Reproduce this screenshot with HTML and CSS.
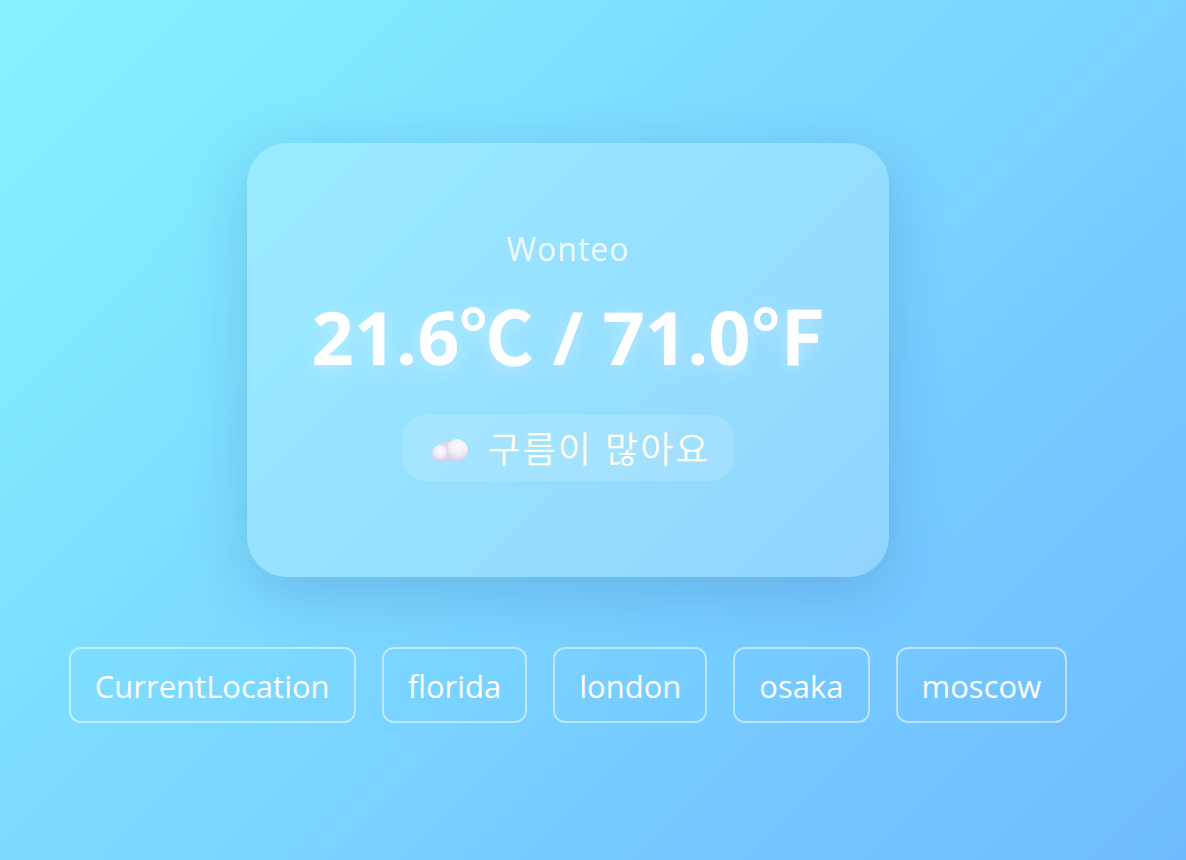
FILE: index.html
```html
<!DOCTYPE html>
<html lang="ko">
<head>
<meta charset="utf-8">
<meta name="viewport" content="width=device-width, initial-scale=1">
<title>Weather</title>
<link rel="stylesheet" href="styles.css">
</head>
<body>
<main class="app">
  <section class="card">
    <h2 class="city">Wonteo</h2>
    <h1 class="temp">21.6℃ / 71.0℉</h1>
    <p class="sky">
      <svg class="cloud" viewBox="0 0 36 24" aria-hidden="true">
        <defs>
          <radialGradient id="puff" cx=".56" cy=".32" r=".76">
            <stop offset="0" stop-color="#fcfbfd"/>
            <stop offset=".5" stop-color="#f0eef6"/>
            <stop offset=".8" stop-color="#ddd5ee"/>
            <stop offset="1" stop-color="#d1c5eb"/>
          </radialGradient>
          <linearGradient id="base" x1="0" y1="0" x2="0" y2="1">
            <stop offset="0" stop-color="#d3d9e2"/>
            <stop offset=".5" stop-color="#e6e2f0"/>
            <stop offset="1" stop-color="#d2c6ee"/>
          </linearGradient>
        </defs>
        <path fill="url(#base)" d="M7 23C3 23 0 20 0 16c0-4 3-8 7-9 1-3 5-4 9-3l14 8c4 5 1 11-5 11z"/>
        <path fill="url(#puff)" d="M8 7c4 0 7 4 7 8 0 5-3 8-7 8s-8-3-8-7c0-5 3-9 8-9z"/>
        <path fill="url(#puff)" d="M25 1c6 0 11 5 11 11s-4 11-10 11h-5c-4-2-7-6-7-11C14 6 19 1 25 1z"/>
      </svg>
      <span>구름이 많아요</span>
    </p>
  </section>
  <nav class="places">
    <button class="place" type="button">CurrentLocation</button>
    <button class="place" type="button">florida</button>
    <button class="place" type="button">london</button>
    <button class="place" type="button">osaka</button>
    <button class="place" type="button">moscow</button>
  </nav>
</main>
</body>
</html>
```
FILE: styles.css
```css
* { box-sizing: border-box; }
body {
  margin: 0;
  min-height: 100vh;
  display: flex;
  background: linear-gradient(135deg, #86f2ff, #6fbaff);
  font-family: "Open Sans", "Noto Sans CJK KR", sans-serif;
  color: #fff;
}
.app {
  flex: 1;
  display: flex;
  flex-direction: column;
  align-items: center;
  justify-content: center;
  gap: 70px;
  padding: 24px 50px 19px 0;
}
.card {
  display: flex;
  flex-direction: column;
  align-items: center;
  padding: 80px 64px 96px;
  border-radius: 40px;
  background: rgba(255, 255, 255, .2);
  box-shadow: 0 16px 60px rgba(31, 60, 135, .2);
}
.city {
  margin: 0;
  font-size: 32px;
  line-height: 52px;
  font-weight: 400;
  letter-spacing: 1px;
  opacity: .85;
}
.temp {
  margin: 8px 0 24px;
  font-size: 74px;
  line-height: 108px;
  font-weight: 700;
  white-space: nowrap;
  text-shadow: 0 4px 20px rgba(255, 255, 255, .4);
}
.sky {
  margin: 0;
  display: flex;
  align-items: center;
  gap: 20px;
  padding: 6px 24px 8px 30px;
  border-radius: 24px;
  background: rgba(255, 255, 255, .15);
  color: #fffff0;
  font-family: "Noto Sans CJK KR", sans-serif;
  font-size: 36px;
  line-height: 52px;
  font-weight: 350;
  letter-spacing: 2px;
}
.cloud {
  width: 36px;
  height: 24px;
  margin-top: 6px;
}
.places {
  display: flex;
  justify-content: center;
  gap: 26px;
}
.place {
  padding: 13px 24px 11px;
  border: 2px solid rgba(255, 255, 255, .5);
  border-radius: 12px;
  background: transparent;
  color: #fff;
  font: 400 31px/48px "Open Sans", sans-serif;
  cursor: pointer;
}
```
